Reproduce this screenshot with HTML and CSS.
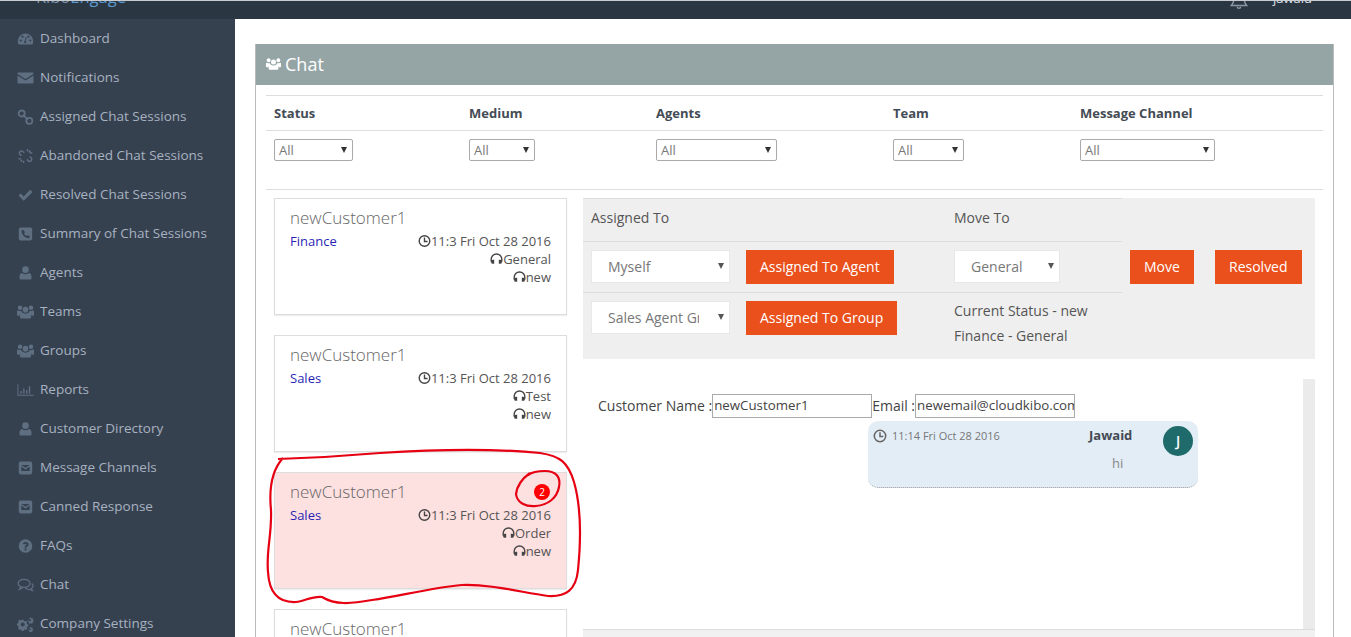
FILE: index.html
```html
<!DOCTYPE html>
<html lang="en">
<head>
    <meta charset="UTF-8">
    <meta name="viewport" content="width=device-width, initial-scale=1.0">
    <title>KiboEngage - Chat</title>
    <link rel="stylesheet" href="styles.css">
</head>
<body>
    <svg class="defs" aria-hidden="true">
        <symbol id="i-dash" viewBox="0 0 16 16"><path fill-rule="evenodd" d="M8 2.5A7.7 7.7 0 0 0 .3 10.2c0 1.3.3 2.3.8 3.3h13.8c.5-1 .8-2 .8-3.3A7.7 7.7 0 0 0 8 2.5zM3.3 10.6a1.1 1.1 0 1 1 0-2.2 1.1 1.1 0 0 1 0 2.2zM5 6.8a1.1 1.1 0 1 1 0-2.2 1.1 1.1 0 0 1 0 2.2zm3.1 5.6a1.5 1.5 0 0 1-.9-2.7l1.2-4 .9.3-1.2 4a1.5 1.5 0 0 1 0 2.4zM11 6.8a1.1 1.1 0 1 1 0-2.2 1.1 1.1 0 0 1 0 2.2zm1.7 3.8a1.1 1.1 0 1 1 0-2.2 1.1 1.1 0 0 1 0 2.2z"/></symbol>
        <symbol id="i-mail" viewBox="0 0 16 16"><path d="M0 3.6C0 3 .5 2.5 1.1 2.500h13.800c.6 0 1.100.5 1.100 1.100v.5L8 9 0 4.100zM0 5.600l8 5 8-5v6.800c0 .6-.5 1.100-1.100 1.100H1.100c-.6 0-1.100-.5-1.100-1.100z"/></symbol>
        <symbol id="i-link" viewBox="0 0 16 16"><g fill="none" stroke="currentColor" stroke-width="1.800"><rect x="1.200" y="1.500" width="6" height="6" rx="2.800"/><rect x="8.800" y="8.800" width="6" height="6" rx="2.800"/><path d="M5.500 5.800l5 4.800"/></g></symbol>
        <symbol id="i-unlink" viewBox="0 0 16 16"><g fill="none" stroke="currentColor" stroke-width="1.500"><path d="M6.800 4.800L5.400 3.500a2 2 0 0 0-2.900 0 2 2 0 0 0 0 2.900l1.400 1.400"/><path d="M9.400 11.400l1.300 1.300a2 2 0 0 0 2.900 0 2 2 0 0 0 0-2.900l-1.400-1.300"/><path d="M10 1v2.500M12.800 2.500L11.500 4.500M14.800 5h-2.300M1 10.800h2.400M3.200 13.500l1.300-1.700M6 15v-2.300"/></g></symbol>
        <symbol id="i-check" viewBox="0 0 16 16"><path d="M1 8.600l2.200-2.200 3 3 6.500-6.600L15 5 6.200 13.800z"/></symbol>
        <symbol id="i-phone" viewBox="0 0 16 16"><path fill-rule="evenodd" d="M3.200 1.500h9.600c1 0 1.900.9 1.900 1.900v9.200c0 1-.9 1.900-1.900 1.900H3.200c-1 0-1.900-.9-1.900-1.900V3.400c0-1 .9-1.900 1.900-1.900zM5.800 3.700L4 4.500c-.3 3.800 3.500 8 7.500 7.800l.9-1.800-2.400-1.500-1 1c-1.200-.6-2-1.600-2.500-2.700l1-1z"/></symbol>
        <symbol id="i-user" viewBox="0 0 16 16"><path d="M8 1.300a3.300 3.300 0 0 1 3.300 3.400A3.300 3.300 0 0 1 8 8 3.300 3.300 0 0 1 4.700 4.700 3.300 3.300 0 0 1 8 1.300zM4.500 8c1 .8 2.200 1.200 3.500 1.200s2.500-.4 3.500-1.200c1.700.3 2.500 1.800 2.500 4v1.200c0 .8-.6 1.300-1.300 1.300H3.300c-.7 0-1.300-.5-1.300-1.300V12c0-2.200.8-3.700 2.500-4z"/></symbol>
        <symbol id="i-users" viewBox="0 0 18 16"><path d="M9 2.500a3 3 0 1 1 0 6 3 3 0 0 1 0-6zM3.200 1a2.400 2.400 0 1 1 0 4.800 2.400 2.400 0 0 1 0-4.800zM14.800 1a2.400 2.400 0 1 1 0 4.800 2.400 2.400 0 0 1 0-4.800zM5.500 8.600c.9.8 2.100 1.200 3.500 1.200s2.600-.4 3.500-1.200c1.700.2 2.300 1.600 2.300 3.400v1.500c0 .9-.6 1.500-1.300 1.500H4.500c-.7 0-1.300-.6-1.300-1.500V12c0-1.800.6-3.200 2.300-3.400zM0 7.500c0-.9.600-1.200 1.300-1.100.6.400 1.200.6 1.900.6.600 0 1.100-.1 1.500-.3-.1 1 .2 1.700.7 2.200-1.500.4-2.500 1.600-2.700 3.100H1.200C.5 12 0 11.500 0 10.800zM18 7.500v3.300c0 .7-.5 1.200-1.200 1.200h-1.500c-.2-1.500-1.200-2.700-2.700-3.100.5-.5.8-1.200.7-2.200.4.200.9.300 1.500.3.700 0 1.300-.2 1.900-.6.700-.1 1.300.2 1.300 1.100z"/></symbol>
        <symbol id="i-chart" viewBox="0 0 18 16"><path d="M.5 2h1v11h16v1H.5zM3.500 9h1.500v3H3.500zM6.500 6.500H8V12H6.500zM9.500 8H11v4H9.500zM12.500 4H14v8h-1.500z"/></symbol>
        <symbol id="i-mailbox" viewBox="0 0 16 16"><path fill-rule="evenodd" d="M3.200 1.500h9.600c1 0 1.900.9 1.900 1.900v9.200c0 1-.9 1.900-1.900 1.900H3.200c-1 0-1.900-.9-1.900-1.900V3.400c0-1 .9-1.900 1.900-1.900zM3.800 5l4.200 2.800L12.200 5zm0 1.600V11h8.400V6.600L8 9.400z"/></symbol>
        <symbol id="i-help" viewBox="0 0 16 16"><path fill-rule="evenodd" d="M8 1.200a6.800 6.800 0 1 1 0 13.600A6.800 6.800 0 0 1 8 1.200zM7 10.600v1.900h2v-1.900zM5.300 5.800l1.300.8c.3-.6.700-.9 1.300-.9.500 0 1 .3 1 .8 0 .4-.3.700-.8 1C7.400 8 7 8.500 7 9.300v.4h2v-.3c0-.3.200-.5.700-.8.800-.5 1.400-1.100 1.400-2.200C11.100 4.800 9.500 4 8 4c-1.200 0-2.100.5-2.700 1.800z"/></symbol>
        <symbol id="i-chat" viewBox="0 0 18 16"><g fill="none" stroke="currentColor" stroke-width="1.300"><ellipse cx="7.500" cy="6.300" rx="6.300" ry="4.300"/><path d="M4 10l-1.500 2.500 3.500-1.600"/><path d="M15.500 6.500c1.300 1 1.800 2.200 1.300 3.500-.3.800-1 1.500-1.800 1.900l1.200 2-3.300-1.400c-1.500.1-3-.2-4.200-1"/></g></symbol>
        <symbol id="i-cogs" viewBox="0 0 18 16"><path fill-rule="evenodd" d="M5 3.500h2l.3 1.300 1.100.5 1.100-.7 1.400 1.400-.7 1.100.5 1.100 1.300.3v2l-1.300.3-.5 1.100.7 1.100-1.400 1.400-1.100-.7-1.100.5-.3 1.300H5l-.3-1.300-1.100-.5-1.100.7L1.100 12l.7-1.100-.5-1.100L0 9.500v-2l1.300-.3.500-1.100-.7-1.100 1.400-1.400 1.100.7 1.100-.5zM6 6.300a2.200 2.200 0 1 0 0 4.400 2.200 2.200 0 0 0 0-4.400z"/><path fill-rule="evenodd" d="M14 .5l.9.200.1 1 .7.500.9-.400.6.800-.6.800.2.800 1 .4-.1 1-1 .2-.500.700.4.900-.9.500-.700-.7h-.9l-.6.700-.9-.5.400-.9-.5-.7-1-.2v-1l1-.4.200-.8-.6-.8.600-.8.900.4.700-.5.100-1zm-.5 2.300a1.200 1.200 0 1 0 .1 2.400 1.200 1.200 0 0 0-.1-2.400zM14 10.500l.8.200.1.800.6.400.8-.3.500.7-.5.700.1.700.9.300v.9l-.9.200-.4.600.3.800-.7.400-.6-.6h-.8l-.5.600-.8-.4.300-.8-.4-.6-.9-.2v-.9l.9-.3.100-.7-.5-.7.500-.7.800.3.600-.4.100-.8zm-.4 2a1 1 0 1 0 .1 2 1 1 0 0 0-.1-2z"/></symbol>
        <symbol id="i-clock" viewBox="0 0 14 14"><g fill="none" stroke="currentColor" stroke-width="1.500"><circle cx="7" cy="7" r="5.700"/><path d="M7 3.300V7.500H10.300"/></g></symbol>
        <symbol id="i-headset" viewBox="0 0 14 14"><path fill="none" stroke="currentColor" stroke-width="1.500" d="M1.300 10V7.300a5.700 5.700 0 0 1 11.400 0V10"/><path d="M3 7.800h1.500v4.400H3a1.800 1.800 0 0 1-1.800-1.800v-.8A1.800 1.800 0 0 1 3 7.800zM9.500 7.800H11a1.800 1.800 0 0 1 1.800 1.800v.8A1.800 1.800 0 0 1 11 12.200H9.500z"/></symbol>
        <symbol id="i-bell" viewBox="0 0 16 16"><path fill="none" stroke="currentColor" stroke-width="1.300" d="M8 1a4.500 4.500 0 0 0-4.500 4.500c0 3.500-1 5-2.300 6.500h13.600c-1.300-1.500-2.300-3-2.300-6.500A4.500 4.500 0 0 0 8 1zM6.500 13a1.500 1.500 0 0 0 3 0"/></symbol>
    </svg>

    <header class="topbar">
        <div class="brand">Kibo<span class="brand-blue">Engage</span></div>
        <svg class="bell"><use href="#i-bell"/></svg>
        <div class="username">jawaid</div>
    </header>

    <div class="layout">
        <nav class="sidebar">
            <a class="nav-item"><svg class="nav-ico"><use href="#i-dash"/></svg>Dashboard</a>
            <a class="nav-item"><svg class="nav-ico"><use href="#i-mail"/></svg>Notifications</a>
            <a class="nav-item"><svg class="nav-ico"><use href="#i-link"/></svg>Assigned Chat Sessions</a>
            <a class="nav-item"><svg class="nav-ico"><use href="#i-unlink"/></svg>Abandoned Chat Sessions</a>
            <a class="nav-item"><svg class="nav-ico"><use href="#i-check"/></svg>Resolved Chat Sessions</a>
            <a class="nav-item"><svg class="nav-ico"><use href="#i-phone"/></svg>Summary of Chat Sessions</a>
            <a class="nav-item"><svg class="nav-ico"><use href="#i-user"/></svg>Agents</a>
            <a class="nav-item"><svg class="nav-ico"><use href="#i-users"/></svg>Teams</a>
            <a class="nav-item"><svg class="nav-ico"><use href="#i-users"/></svg>Groups</a>
            <a class="nav-item"><svg class="nav-ico"><use href="#i-chart"/></svg>Reports</a>
            <a class="nav-item"><svg class="nav-ico"><use href="#i-user"/></svg>Customer Directory</a>
            <a class="nav-item"><svg class="nav-ico"><use href="#i-mailbox"/></svg>Message Channels</a>
            <a class="nav-item"><svg class="nav-ico"><use href="#i-mailbox"/></svg>Canned Response</a>
            <a class="nav-item"><svg class="nav-ico"><use href="#i-help"/></svg>FAQs</a>
            <a class="nav-item"><svg class="nav-ico"><use href="#i-chat"/></svg>Chat</a>
            <a class="nav-item"><svg class="nav-ico"><use href="#i-cogs"/></svg>Company Settings</a>
        </nav>

        <main class="content">
            <section class="portlet">
                <div class="portlet-title"><svg class="title-ico"><use href="#i-users"/></svg>Chat</div>
                <div class="portlet-body">
                    <!-- filters -->
                    <div class="filters">
                        <div class="filter-label">Status</div>
                        <div class="filter-label">Medium</div>
                        <div class="filter-label">Agents</div>
                        <div class="filter-label">Team</div>
                        <div class="filter-label">Message Channel</div>
                        <div class="filter-cell"><span class="pick"><select class="filter-select w-status"><option>All</option></select></span></div>
                        <div class="filter-cell"><span class="pick"><select class="filter-select w-medium"><option>All</option></select></span></div>
                        <div class="filter-cell"><span class="pick"><select class="filter-select w-agents"><option>All</option></select></span></div>
                        <div class="filter-cell"><span class="pick"><select class="filter-select w-team"><option>All</option></select></span></div>
                        <div class="filter-cell"><span class="pick"><select class="filter-select w-channel"><option>All</option></select></span></div>
                    </div>

                    <div class="chat-wrap">
                        <!-- sessions list -->
                        <div class="sessions">
                            <div class="session">
                                <div class="session-name">newCustomer1</div>
                                <div class="session-info">
                                    <span class="session-dept">Finance</span>
                                    <div class="session-meta">
                                        <div class="meta-line"><svg class="mini-ico"><use href="#i-clock"/></svg>11:3 Fri Oct 28 2016</div>
                                        <div class="meta-line"><svg class="mini-ico"><use href="#i-headset"/></svg>General</div>
                                        <div class="meta-line"><svg class="mini-ico"><use href="#i-headset"/></svg>new</div>
                                    </div>
                                </div>
                            </div>
                            <div class="session">
                                <div class="session-name">newCustomer1</div>
                                <div class="session-info">
                                    <span class="session-dept">Sales</span>
                                    <div class="session-meta">
                                        <div class="meta-line"><svg class="mini-ico"><use href="#i-clock"/></svg>11:3 Fri Oct 28 2016</div>
                                        <div class="meta-line"><svg class="mini-ico"><use href="#i-headset"/></svg>Test</div>
                                        <div class="meta-line"><svg class="mini-ico"><use href="#i-headset"/></svg>new</div>
                                    </div>
                                </div>
                            </div>
                            <div class="session unread">
                                <div class="session-name">newCustomer1</div>
                                <span class="badge">2</span>
                                <div class="session-info">
                                    <span class="session-dept">Sales</span>
                                    <div class="session-meta">
                                        <div class="meta-line"><svg class="mini-ico"><use href="#i-clock"/></svg>11:3 Fri Oct 28 2016</div>
                                        <div class="meta-line"><svg class="mini-ico"><use href="#i-headset"/></svg>Order</div>
                                        <div class="meta-line"><svg class="mini-ico"><use href="#i-headset"/></svg>new</div>
                                    </div>
                                </div>
                            </div>
                            <div class="session">
                                <div class="session-name">newCustomer1</div>
                            </div>
                        </div>

                        <!-- right side -->
                        <div class="detail">
                            <div class="actions">
                                <div class="act-cell act-head act-line act-pad">Assigned To</div>
                                <div class="act-cell act-head act-line"></div>
                                <div class="act-cell act-head act-line">Move To</div>
                                <div class="act-cell"></div>
                                <div class="act-cell"></div>

                                <div class="act-cell act-top act-line act-pad"><span class="pick pick-soft"><select class="act-select w-myself"><option>Myself</option></select></span></div>
                                <div class="act-cell act-top act-line"><button class="btn-orange" type="button">Assigned To Agent</button></div>
                                <div class="act-cell act-top act-line"><span class="pick pick-soft"><select class="act-select w-general"><option>General</option></select></span></div>
                                <div class="act-cell act-top act-btn"><button class="btn-orange" type="button">Move</button></div>
                                <div class="act-cell act-top"><button class="btn-orange" type="button">Resolved</button></div>

                                <div class="act-cell act-pad act-top"><span class="pick pick-soft"><select class="act-select w-myself"><option>Sales Agent Group</option></select></span></div>
                                <div class="act-cell act-top"><button class="btn-orange" type="button">Assigned To Group</button></div>
                                <div class="act-cell act-status">Current Status - new<br>Finance - General</div>
                                <div class="act-cell"></div>
                                <div class="act-cell"></div>
                            </div>

                            <div class="messages">
                                <div class="messages-main">
                                    <div class="customer-line">
                                        <label class="customer-label">Customer Name :</label><input class="customer-input" type="text" value="newCustomer1"><label class="customer-label">Email :</label><input class="customer-input" type="text" value="newemail@cloudkibo.com">
                                    </div>
                                    <div class="bubble">
                                        <div class="bubble-time"><svg class="bubble-clock"><use href="#i-clock"/></svg>11:14 Fri Oct 28 2016</div>
                                        <div class="bubble-name">Jawaid</div>
                                        <div class="avatar">J</div>
                                        <div class="bubble-text">hi</div>
                                    </div>
                                </div>
                                <div class="scroll-track"></div>
                            </div>
                            <div class="messages-foot"></div>
                        </div>
                    </div>
                </div>
            </section>
        </main>
    </div>

    <!-- red pen marks drawn on the screenshot -->
    <svg class="ink" viewBox="0 0 1351 637">
        <path d="M283 458C272 470 269 490 271 510C272 535 266 550 268 572C269 590 276 603 296 602C305 601 312 596 322 597C335 605 350 604 372 600C400 596 430 588 462 585C490 584 520 592 548 596C566 597 576 590 578 570C581 540 582 510 574 482C568 462 560 456 540 453C500 449 440 449 380 453C345 456 310 458 278 459"/>
        <path d="M530 473C523 478 517 486 516 494C517 503 526 507 536 506C548 505 557 498 559 487C561 477 556 471 545 471C538 471 532 472 528 475"/>
    </svg>
</body>
</html>
```

FILE: styles.css
```css
html, body {
    height: 100%;
}
body {
    margin: 0;
    overflow: hidden;
    background: #fff;
    color: #555;
    font-family: "Open Sans", "Liberation Sans", sans-serif;
    font-size: 14px;
}
.defs {
    display: none;
}

/* top bar, cut off by the top of the window */
.topbar {
    height: 18px;
    display: flex;
    overflow: hidden;
    background: #2b3643;
    border-top: 1px solid #c8ccd0;
    color: #cdd3da;
}
.brand {
    margin: -16px 0 0 36px;
    height: 24px;
    line-height: 24px;
    font-size: 16.5px;
    color: #7f93a8;
}
.brand-blue {
    color: #5b9bd1;
}
.bell {
    width: 18px;
    height: 18px;
    margin: -9px 0 0 1104px;
    color: #8a95a3;
}
.username {
    margin: -13px 0 0 25px;
    height: 20px;
    line-height: 20px;
    font-size: 13px;
    color: #dfe3e8;
}

.layout {
    display: flex;
    height: calc(100% - 19px);
    overflow: hidden;
}

/* side menu */
.sidebar {
    width: 235px;
    flex: none;
    overflow: hidden;
    background: #364150;
}
.nav-item {
    display: flex;
    align-items: center;
    height: 38px;
    padding: 0 0 1px 17px;
    color: #a7b2c0;
    font-size: 13.5px;
}
.nav-ico {
    width: 17px;
    height: 16px;
    margin: 1px 6px 0 0;
    flex: none;
    fill: currentColor;
    color: #5f6f82;
}

/* main part */
.content {
    flex: 1;
    min-width: 0;
    padding: 25px 17px 0 20px;
}
.portlet {
    border-left: 1px solid #bbb;
    border-right: 1px solid #bbb;
    height: 100%;
    overflow: hidden;
}
.portlet-title {
    display: flex;
    align-items: center;
    height: 39px;
    padding: 0 0 2px 10px;
    background: #95a5a6;
    color: #fff;
    font-size: 18px;
}
.title-ico {
    width: 15px;
    height: 14px;
    margin-right: 4px;
    fill: currentColor;
}
.portlet-body {
    padding: 10px 10px 0;
}

/* filters */
.filters {
    display: grid;
    grid-template-columns: 195px 187px 237px 187px 1fr;
    border-top: 1px solid #ddd;
    border-bottom: 1px solid #ddd;
}
.filter-label {
    height: 34px;
    line-height: 35px;
    padding-left: 8px;
    border-bottom: 1px solid #ddd;
    font-size: 13px;
    font-weight: 700;
    color: #444b55;
}
.filter-cell {
    height: 58px;
    padding: 8px 0 0 8px;
    box-sizing: border-box;
}
.pick {
    display: inline-block;
    position: relative;
    vertical-align: top;
}
.pick::after {
    content: "";
    position: absolute;
    top: 8px;
    right: 6px;
    border-left: 3.5px solid transparent;
    border-right: 3.5px solid transparent;
    border-top: 6px solid #333;
    pointer-events: none;
}
.pick-soft::after {
    top: 13px;
    right: 6px;
    border-top-color: #555;
}
select {
    appearance: none;
    -webkit-appearance: none;
    display: block;
    font-family: inherit;
}
.filter-select {
    height: 22px;
    padding: 0 0 0 4px;
    background: #fff;
    border: 1px solid #aaa;
    border-radius: 2px;
    color: #777;
    font-size: 13px;
}
.w-status { width: 79px; }
.w-medium { width: 66px; }
.w-agents { width: 121px; }
.w-team { width: 71px; }
.w-channel { width: 135px; }

.chat-wrap {
    display: flex;
    margin-top: 8px;
    padding-left: 8px;
}

/* session cards */
.sessions {
    width: 293px;
    flex: none;
}
.session {
    position: relative;
    box-sizing: border-box;
    height: 117px;
    margin-bottom: 20px;
    padding: 8px 15px;
    background: #fff;
    border: 1px solid #ddd;
    box-shadow: 0 1px 1px #eee;
}
.session.unread {
    background: #fde0e0;
}
.session-name {
    height: 22px;
    line-height: 22px;
    font-size: 17px;
    font-weight: 300;
    color: #666;
}
.session-info {
    display: flex;
    justify-content: space-between;
    margin-top: 3px;
    font-size: 13px;
    line-height: 18px;
}
.session-dept {
    font-size: 13px;
    color: #2a1fb5;
}
.session-meta {
    text-align: right;
    color: #555;
}
.meta-line {
    height: 18px;
}
.mini-ico {
    width: 13px;
    height: 14px;
    vertical-align: -2px;
    fill: currentColor;
    color: #444;
}
.badge {
    position: absolute;
    top: 11px;
    right: 16px;
    width: 16px;
    height: 16px;
    border-radius: 50%;
    background: #f00;
    color: #fff;
    font-size: 10px;
    line-height: 16px;
    text-align: center;
}

/* assign / move panel */
.detail {
    width: 732px;
    margin-left: 16px;
    flex: none;
}
.actions {
    display: grid;
    grid-template-columns: 163px 208px 168px 93px 100px;
    grid-template-rows: 44px 51px 66px;
    background: #efefef;
    color: #555;
}
.act-cell {
    box-sizing: border-box;
    display: flex;
    align-items: center;
}
.act-head {
    border-top: 1px solid #ddd;
    padding-bottom: 5px;
}
.act-line {
    border-bottom: 1px solid #ddd;
}
.act-pad {
    padding-left: 8px;
}
.act-top {
    align-items: flex-start;
    padding-top: 8px;
}
.act-btn {
    padding-left: 8px;
}
.act-status {
    display: block;
    line-height: 25px;
    padding-top: 5px;
}
.act-select {
    height: 33px;
    padding: 0 30px 0 16px;
    background: #fff;
    border: 1px solid #e8e8e8;
    color: #777;
    font-size: 14px;
}
.w-myself { width: 139px; }
.w-general { width: 106px; }
.btn-orange {
    height: 34px;
    padding: 0 14px 1px;
    background: #e9501c;
    border: 0;
    color: #fff;
    font-family: inherit;
    font-size: 14px;
    white-space: nowrap;
}

/* messages */
.messages {
    display: flex;
    height: 250px;
    margin-top: 20px;
}
.messages-main {
    flex: 1;
    padding: 15px 0 0 15px;
}
.scroll-track {
    width: 12px;
    background: #ebebeb;
}
.messages-foot {
    height: 20px;
    background: #f1f1f1;
    border-top: 1px solid #ddd;
}
.customer-line {
    display: flex;
    align-items: center;
    height: 24px;
    color: #444;
}
.customer-label {
    padding-bottom: 2px;
    white-space: nowrap;
}
.customer-input {
    box-sizing: border-box;
    width: 160px;
    height: 24px;
    padding: 0 0 2px 1px;
    border: 1px solid #aaa;
    color: #444;
    font-family: inherit;
    font-size: 13.3px;
}
.bubble {
    box-sizing: border-box;
    display: grid;
    grid-template-columns: 216px 74px 30px;
    grid-template-rows: 30px 1fr;
    width: 330px;
    height: 67px;
    margin: 3px 0 0 270px;
    padding: 5px 5px 0;
    background: #e3edf6;
    border-radius: 10px;
    border-bottom: 1px dotted #999;
}
.bubble-time {
    display: flex;
    align-items: flex-start;
    padding-top: 3px;
    font-size: 11px;
    line-height: 14px;
    color: #777;
}
.bubble-clock {
    width: 14px;
    height: 14px;
    margin-right: 5px;
    color: #666;
}
.bubble-name {
    font-size: 13px;
    font-weight: 700;
    line-height: 18px;
    color: #444b55;
}
.avatar {
    width: 30px;
    height: 30px;
    border-radius: 50%;
    background: #1f6b6b;
    color: #fff;
    font-size: 14px;
    font-weight: 600;
    line-height: 30px;
    text-align: center;
}
.bubble-text {
    grid-column: 2;
    margin-top: -2px;
    padding: 0 0 0 23px;
    font-size: 13px;
    line-height: 18px;
    color: #888;
}

.ink {
    position: absolute;
    top: 0;
    left: 0;
    width: 1351px;
    height: 637px;
    fill: none;
    stroke: #e60012;
    stroke-width: 2.200;
    pointer-events: none;
}
```
